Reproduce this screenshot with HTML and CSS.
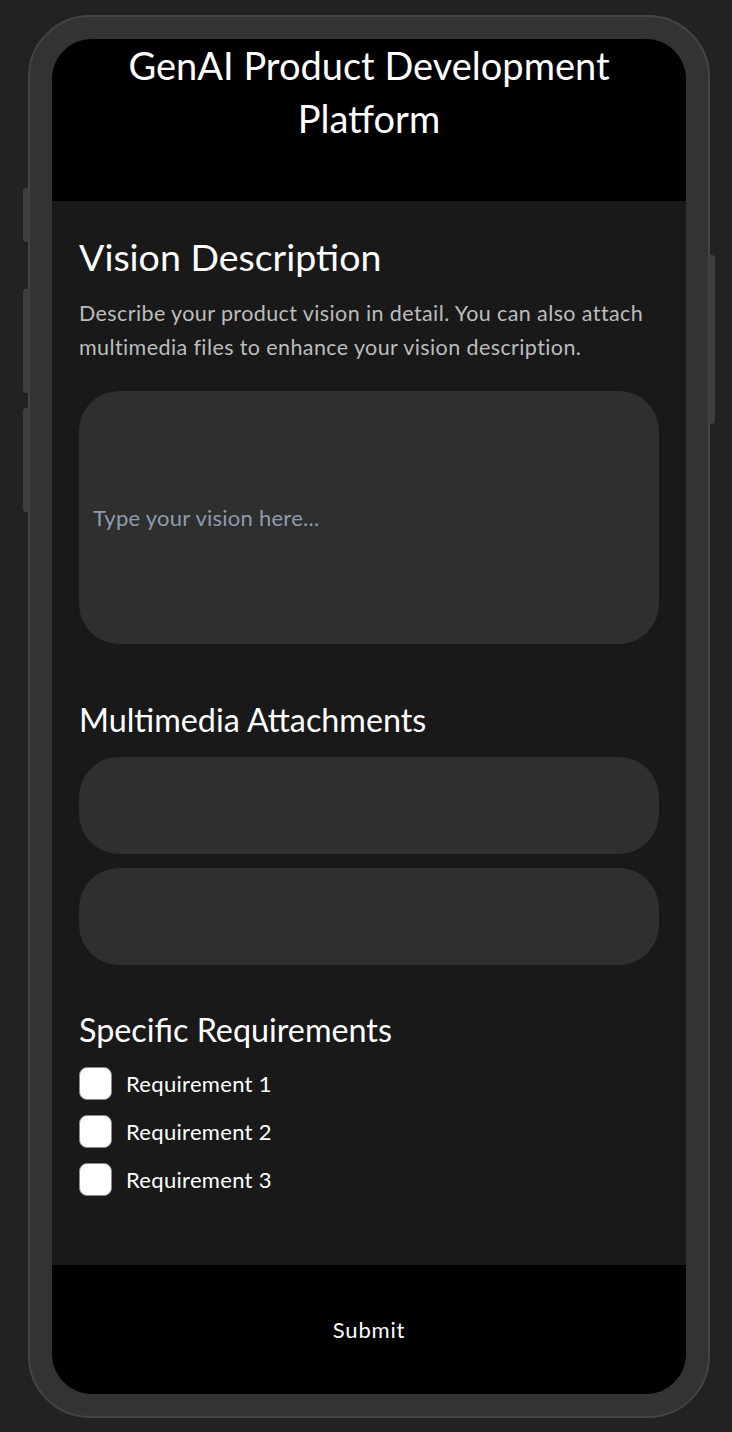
FILE: index.html
```html
<!DOCTYPE html>
<html lang="en">
<head>
<meta charset="utf-8">
<title>GenAI Product Development Platform</title>
<link rel="stylesheet" href="styles.css">
</head>
<body>
  <div class="phone">
    <span class="side-btn left b1"></span>
    <span class="side-btn left b2"></span>
    <span class="side-btn left b3"></span>
    <span class="side-btn right b4"></span>
    <div class="screen">
      <header class="app-header">
        <h1 class="app-title">GenAI Product Development Platform</h1>
      </header>
      <main class="content">
        <h2 class="section-title big">Vision Description</h2>
        <p class="description">Describe your product vision in detail. You can also attach multimedia files to enhance your vision description.</p>
        <input class="vision-input" type="text" placeholder="Type your vision here...">
        <h3 class="section-title mid">Multimedia Attachments</h3>
        <div class="attachments">
          <div class="attach-box"></div>
          <div class="attach-box"></div>
        </div>
        <h3 class="section-title mid req-title">Specific Requirements</h3>
        <ul class="req-list">
          <li class="req-item"><input class="req-check" type="checkbox" id="r1"><label for="r1">Requirement 1</label></li>
          <li class="req-item"><input class="req-check" type="checkbox" id="r2"><label for="r2">Requirement 2</label></li>
          <li class="req-item"><input class="req-check" type="checkbox" id="r3"><label for="r3">Requirement 3</label></li>
        </ul>
      </main>
      <footer class="app-footer">
        <button class="submit-btn" type="button">Submit</button>
      </footer>
    </div>
  </div>
</body>
</html>
```

FILE: styles.css
```css
* { box-sizing: border-box; }

html, body {
  margin: 0;
  background: #222222;
}

body {
  padding: 15px 0 0 28px;
  font-family: "Lato", "Noto Sans", sans-serif;
  color: #ffffff;
  height: 1432px;
  overflow: hidden;
}

.phone {
  position: relative;
  width: 682px;
  height: 1403px;
  background: #333333;
  border: 2px solid #444444;
  border-radius: 62px;
  padding: 22px;
}

.side-btn {
  position: absolute;
  width: 6px;
  background: #3e3e3e;
}
.side-btn.left { left: -7px; border-radius: 3px 0 0 3px; }
.side-btn.right { right: -7px; border-radius: 0 3px 3px 0; }
.b1 { top: 171px; height: 54px; }
.b2 { top: 272px; height: 104px; }
.b3 { top: 391px; height: 104px; }
.b4 { top: 238px; height: 169px; }

.screen {
  width: 100%;
  height: 100%;
  border-radius: 40px;
  overflow: hidden;
  background: #191919;
  display: flex;
  flex-direction: column;
}

.app-header {
  background: #000000;
  height: 162px;
  flex: none;
  padding: 0 16px;
}

.app-title {
  margin: 0;
  text-align: center;
  font-weight: 400;
  font-size: 38px;
  line-height: 53px;
  color: #ffffff;
}

.content {
  flex: 1;
  padding: 33px 27px 0;
  display: flex;
  flex-direction: column;
}

.section-title {
  margin: 0;
  font-weight: 400;
  color: #ffffff;
}
.section-title.big {
  font-size: 37.5px;
  line-height: 46px;
}
.section-title.mid {
  font-size: 32.3px;
  line-height: 40px;
  margin-top: 56px;
}
.section-title.req-title { margin-top: 45px; }

.description {
  margin: 16px 0 0;
  font-size: 21.5px;
  letter-spacing: 0.4px;
  line-height: 34px;
  color: #bdbdbd;
}

.vision-input {
  margin-top: 27px;
  width: 100%;
  height: 253px;
  flex: none;
  border: none;
  outline: none;
  border-radius: 40px;
  background: #2f2f2f;
  padding: 0 14px;
  font-family: inherit;
  font-size: 22px;
  letter-spacing: 0.25px;
  color: #ffffff;
}
.vision-input::placeholder { color: #8e9bae; }

.attachments {
  margin-top: 17px;
  display: flex;
  flex-direction: column;
  gap: 14px;
}

.attach-box {
  height: 97px;
  border-radius: 40px;
  background: #2f2f2f;
}

.req-list {
  list-style: none;
  margin: 17px 0 0;
  padding: 0;
  display: flex;
  flex-direction: column;
  gap: 15px;
}

.req-item {
  display: flex;
  align-items: center;
  gap: 14px;
  height: 33px;
}

.req-check {
  appearance: none;
  -webkit-appearance: none;
  margin: 0;
  width: 33px;
  height: 33px;
  background: #ffffff;
  border: 1.5px solid #8a8a8a;
  border-radius: 8px;
}

.req-item label {
  font-size: 22px;
  letter-spacing: 0.3px;
  color: #ffffff;
}

.app-footer {
  flex: none;
  height: 129px;
  background: #000000;
  display: flex;
  align-items: center;
  justify-content: center;
}

.submit-btn {
  background: none;
  border: none;
  color: #ffffff;
  font-family: inherit;
  font-size: 22px;
  letter-spacing: 0.8px;
  padding: 0;
}
```
